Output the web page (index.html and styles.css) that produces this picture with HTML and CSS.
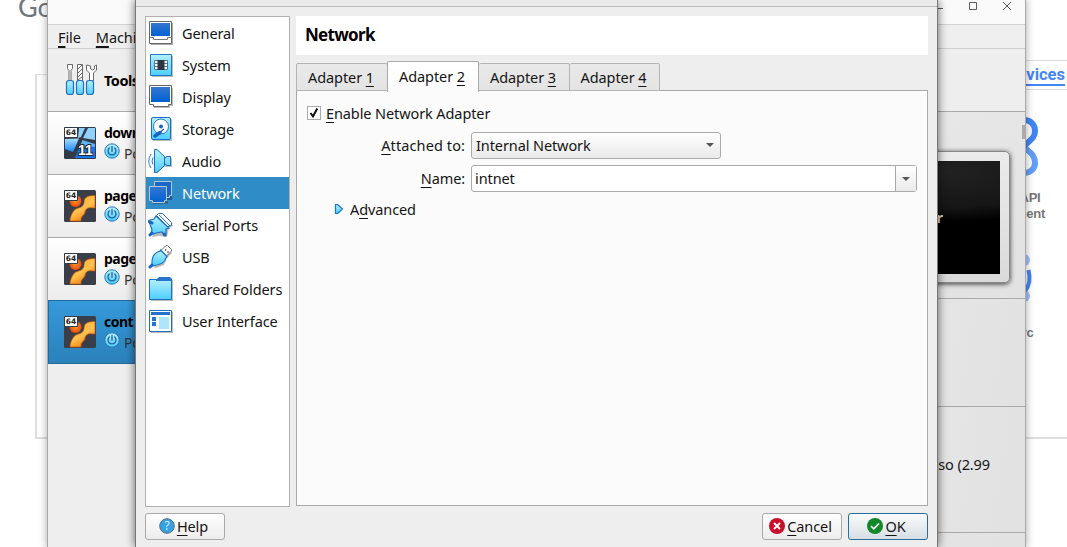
FILE: index.html
```
<!DOCTYPE html>
<html lang="en">
<head>
<meta charset="utf-8">
<title>Network settings</title>
<link rel="stylesheet" href="styles.css">
</head>
<body>
<svg class="defs" width="0" height="0" aria-hidden="true">
  <defs>
    <linearGradient id="cyan" x1="0" y1="0" x2="0" y2="1"><stop offset="0" stop-color="#b4f0ff"/><stop offset="1" stop-color="#4cceff"/></linearGradient>
    <linearGradient id="blue" x1="0" y1="0" x2="0" y2="1"><stop offset="0" stop-color="#3577cf"/><stop offset="1" stop-color="#0060d4"/></linearGradient>
    <linearGradient id="pane" x1="0" y1="0" x2="0" y2="1"><stop offset="0" stop-color="#a8ddff"/><stop offset="1" stop-color="#1688ff"/></linearGradient>
    <linearGradient id="orange" x1="0" y1="0" x2="0.6" y2="1"><stop offset="0" stop-color="#ffb13b"/><stop offset="0.6" stop-color="#ffc04e"/><stop offset="1" stop-color="#f07b0c"/></linearGradient>
    <radialGradient id="ball"><stop offset="0" stop-color="#ff9a32"/><stop offset="1" stop-color="#e84a08"/></radialGradient>
    <symbol id="bits" viewBox="0 0 14 11"><path fill="#fff" stroke="#343b46" d="M0.5 0.5h13v10h-13z"/><text class="bits-text" x="7" y="8.200" text-anchor="middle">64</text></symbol>
    <symbol id="os-win" viewBox="0 0 32 32">
      <rect width="32" height="32" rx="1.500" fill="#343b46"/>
      <path fill="#8fd0ff" d="M15 1h6l-4 9-3 1zM24 1h7v12l-12-2z"/>
      <path fill="url(#pane)" d="M1 12l14-.5L9 25l-8-3z"/>
      <path fill="#5bb5fb" d="M18.500 13L31 17v4l-15-2z"/>
      <path fill="#1675f0" d="M16 18l15 2v11H11z"/>
      <text class="eleven" x="21.500" y="27.500" text-anchor="middle">11</text>
      <use href="#bits" width="14" height="11"/>
    </symbol>
    <symbol id="os-other" viewBox="0 0 32 32">
      <rect width="32" height="32" rx="1.500" fill="#393e49"/>
      <circle cx="11.500" cy="11" r="6" fill="url(#ball)"/>
      <path fill="url(#orange)" stroke="#c95407" stroke-width=".7" d="M31 5.500c-5 0-9 .8-10.500 4-.8 2 .2 4-2 6.500-2.200 2.500-6 1.500-8.500 4.500C7.500 23.500 6 28 6 31h11c-.3-2.500.5-4.500 2.500-6s1-4 3-6c2.300-2 5.500-1 8.500-1z"/>
    </symbol>
    <symbol id="power" viewBox="0 0 16 16"><circle cx="8" cy="8" r="7.200" fill="url(#cyan)" stroke="#2877b9"/><path fill="none" stroke="#225f9d" stroke-width="1.300" stroke-linecap="round" d="M8 3.500v4.800M5.300 5a4 4 0 1 0 5.400 0"/></symbol>
  </defs>
</svg>

<div class="desktop">
  <div class="webpage">
    <div class="logo">Go</div>
    <div class="card"></div>
    <div class="services-bar"><span>vices</span></div>
    <svg class="blob" width="24" height="62" viewBox="0 0 24 62"><g fill="none" stroke-width="6"><path stroke="#669df6" d="M6 30c4 5 12 7 12 17 0 6-5 10-11 10H2"/><path stroke="#4285f4" d="M2 4h5c7 0 11 5 11 11 0 9-8 10-12 17"/></g></svg>
    <svg class="arc" width="30" height="60" viewBox="0 0 30 60"><circle cx="10" cy="9" r="6" fill="#a1c1f7"/><circle cx="10" cy="45" r="6" fill="#a1c1f7"/><path fill="none" stroke="#4285f4" stroke-width="4" d="M14.500 19c2 8 1 16-3.500 21"/></svg>
    <div class="caption caption-api">API<br>ment</div>
    <div class="caption caption-arc">Arc</div>
  </div>

  <div class="manager">
    <div class="titlebar">
      <svg width="90" height="16" viewBox="0 0 90 16" fill="none" stroke="#5b5b5b"><path d="M8 8.500h9M43.500 2.500h7v7h-7zM77 2l8 8M85 2l-8 8"/></svg>
    </div>
    <div class="menubar"><span><u>F</u>ile</span><span><u>M</u>achine</span></div>
    <div class="manager-body">
      <div class="machines">
        <div class="machine tools">
          <svg width="34" height="34" viewBox="0 0 34 34"><g fill="#fff" stroke="#6b6b6b"><path d="M3.500 1.500h5v4l-1.500 2v10H5v-10l-1.500-2zM13.500 1.500h5v16h-5zM22.500 2v5l3 3v8h4v-8l3-3V2l-2 1v3l-2 1-2-1V3z"/><path d="M14 6l4-4M14 10l4-4M14 14l4-4M14 17l4-3"/></g><g fill="url(#cyan)" stroke="#2170c4" stroke-width="1.200"><rect x="2.500" y="17.500" width="7" height="14" rx="2.500"/><rect x="12.500" y="17.500" width="7" height="14" rx="2.500"/><rect x="22.500" y="17.500" width="7" height="14" rx="2.500"/></g></svg>
          <b>Tools</b>
        </div>
        <div class="machine"><svg class="os"><use href="#os-win"/></svg><div class="info"><b>down</b><span><svg class="pw"><use href="#power"/></svg>Pow</span></div></div>
        <div class="machine"><svg class="os"><use href="#os-other"/><use href="#bits" width="14" height="11"/></svg><div class="info"><b>page</b><span><svg class="pw"><use href="#power"/></svg>Pow</span></div></div>
        <div class="machine"><svg class="os"><use href="#os-other"/><use href="#bits" width="14" height="11"/></svg><div class="info"><b>page</b><span><svg class="pw"><use href="#power"/></svg>Pow</span></div></div>
        <div class="machine selected"><svg class="os"><use href="#os-other"/><use href="#bits" width="14" height="11"/></svg><div class="info"><b>cont</b><span><svg class="pw"><use href="#power"/></svg>Pow</span></div></div>
      </div>
      <div class="details">
        <div class="toolbar"></div>
        <div class="preview"><div class="monitor"><div class="screen">r</div></div><i class="thumb"></i></div>
        <div class="section"></div>
        <div class="section storage">so (2.99</div>
        <div class="section last"></div>
      </div>
    </div>
  </div>

  <div class="dialog">
    <div class="dialog-title"></div>
    <div class="dialog-main">
      <div class="nav">
        <div class="nav-item"><svg viewBox="0 0 26 26"><path fill="#aaa" d="M3 3h22v22H3z"/><path fill="#fff" stroke="#666" d="M1.500 1.500h22v22h-22z"/><path fill="url(#blue)" d="M3 3h19v13H3z"/><path fill="#fff" stroke="#777" d="M1.500 17.500h4v2h14v-2h4"/></svg>General</div>
        <div class="nav-item"><svg viewBox="0 0 26 26"><path fill="#bbb" d="M4 4h21v21H4z"/><path fill="url(#cyan)" stroke="#217abd" d="M2.500 2.500h21v21h-21z"/><path fill="#fff" stroke="#46759c" d="M6.500 8.500h13v9h-13zM6 11.500h14M6 14.500h14"/><path fill="#2e3642" d="M9.500 8h7v10h-7z"/></svg>System</div>
        <div class="nav-item"><svg viewBox="0 0 26 26"><path fill="#bbb" d="M4 4h21v18h-3v2H6z"/><path fill="#fff" stroke="#666" d="M1.500 1.500h22v19h-3v2h-15v-2h-4z"/><path fill="url(#blue)" d="M3 3h19v15H3z"/></svg>Display</div>
        <div class="nav-item"><svg viewBox="0 0 26 26"><rect x="5" y="3" width="19" height="22" rx="1" fill="#bbb"/><rect x="3.500" y="1.500" width="19" height="22" rx="1.500" fill="url(#cyan)" stroke="#1e6fc0"/><circle cx="13" cy="10.500" r="7.500" fill="#fff" stroke="#2a78c8"/><circle cx="13" cy="10.500" r="2" fill="#1765c2"/><path stroke="#1765c2" stroke-width="3.500" stroke-linecap="round" d="M7 20l5-3.500"/><path stroke="#1765c2" stroke-width="1.500" d="M11 17l5-4"/></svg>Storage</div>
        <div class="nav-item"><svg viewBox="0 0 26 26"><path fill="#bbb" d="M8 3l6 6h9l1 2v8h-9l-6 6z"/><path fill="url(#cyan)" stroke="#1e6fc0" d="M6.500 1.500h2.500l7.500 7v9l-7.500 7H6.500zM16.500 10h1l1-1.500h4v9h-4l-1-1.500h-1z"/><path fill="none" stroke="#2a7bd0" d="M5 9.500q-2 3.500 0 7M3 6q-4.500 7 0 14"/></svg>Audio</div>
        <div class="nav-item current"><svg viewBox="0 0 26 26"><path fill="#1b5d94" d="M9 4h15v16H9z"/><path fill="#1667c9" stroke="#b7c7d4" d="M6.500 1.500h17v14h-2v2h-13v-2h-2z"/><path fill="#2c6a9c" d="M4 21h16v3H5z"/><path fill="url(#blue)" stroke="#b7c7d4" d="M1.500 6.500h17v14h-2v2h-12v-2h-3z"/></svg>Network</div>
        <div class="nav-item"><svg viewBox="0 0 26 26"><path fill="#bbb" d="M12 3l13 11-4 2-2 9-8-1-7 1z"/><path fill="#fff" stroke="#1e6fc0" d="M10.500 1.500h4l9 9v3l-4 1-11-11z"/><path fill="url(#cyan)" stroke="#1e6fc0" stroke-width="1.200" d="M8 4l13 12-3 1v5l-2 1-2-3-6 1-3 1-2-1 1-3-2-6-2-3 2-1 4-1z"/><path fill="none" stroke="#2a7bd0" d="M11 3l11 11"/><path stroke="#1765c2" stroke-width="3" stroke-linecap="round" d="M2 23l2-2M2 10l2 1M16 22l1 1"/></svg>Serial Ports</div>
        <div class="nav-item"><svg viewBox="0 0 26 26"><path fill="#bbb" d="M18 3l6 6-5 5-3 7-8 3-3-1z"/><path fill="#fff" stroke="#777" d="M13 6.500l5-5h1.500l4 4V7l-5 5z"/><path stroke="#444" stroke-width="1.500" d="M17 5.500l1 1M19.500 7.500l1 1"/><path fill="url(#cyan)" stroke="#1e6fc0" stroke-width="1.200" d="M12.500 6l6.500 6.500-1 1.500c-1 5-6 7-14 8-.5-8 1-13 8-15z"/><path stroke="#1765c2" stroke-width="3" stroke-linecap="round" d="M2 23l2-2"/></svg>USB</div>
        <div class="nav-item"><svg viewBox="0 0 26 26"><path fill="#bbb" d="M3 4h22v21H3z"/><path fill="url(#cyan)" stroke="#1e72bd" d="M1.500 3.500h22v20h-22z"/><path fill="#2673ce" d="M8 4l3-3h11l2 2v2H8z"/></svg>Shared Folders</div>
        <div class="nav-item"><svg viewBox="0 0 26 26"><path fill="#bbb" d="M3 4h22v21H3z"/><path fill="#fff" stroke="#1e72bd" d="M1.500 2.500h22v21h-22z"/><path fill="#2673ce" d="M3 4h19v3H3zM4 9h4v4H4zM4 14h4v4H4z"/><path fill="#ace6fd" d="M11 9h10v12H11z"/></svg>User Interface</div>
      </div>
      <div class="settings">
        <h1>Network</h1>
        <div class="tabs">
          <div class="tab">Adapter <u>1</u></div><div class="tab active">Adapter <u>2</u></div><div class="tab">Adapter <u>3</u></div><div class="tab">Adapter <u>4</u></div>
        </div>
        <div class="panel">
          <div class="check"><span class="box"><svg width="12" height="12" viewBox="0 0 12 12"><path fill="none" stroke="#111" stroke-width="2" d="M2.500 6l2.500 3.300L9.300 1.500"/></svg></span><span><u>E</u>nable Network Adapter</span></div>
          <div class="form">
            <label class="wide"><u>A</u>ttached to:</label>
            <div class="combo">Internal Network<i class="caret"></i></div>
            <label><u>N</u>ame:</label>
            <div class="edit"><span>intnet</span><div class="drop"><i class="caret"></i></div></div>
          </div>
          <div class="advanced"><svg width="10" height="12" viewBox="0 0 10 12"><path fill="url(#cyan)" stroke="#1876d0" stroke-width="1.200" stroke-linejoin="round" d="M1.500 1.500h2l5 4.500-5 4.500h-2z"/></svg><span>A<u>d</u>vanced</span></div>
        </div>
      </div>
    </div>
    <div class="buttons">
      <div class="btn"><svg viewBox="0 0 16 16"><circle cx="8" cy="8" r="7.300" fill="#35a2e4" stroke="#5b6b78"/><text class="q" x="8" y="12" text-anchor="middle">?</text></svg><span><u>H</u>elp</span></div>
      <div class="spacer"></div>
      <div class="btn"><svg viewBox="0 0 16 16"><circle cx="8" cy="8" r="8" fill="#c8102e"/><path stroke="#fff" stroke-width="1.800" d="M5 5l6 6M11 5l-6 6"/></svg><span><u>C</u>ancel</span></div>
      <div class="btn default"><svg viewBox="0 0 16 16"><circle cx="8" cy="8" r="8" fill="#12882a"/><path fill="none" stroke="#fff" stroke-width="1.600" d="M4 8l2.800 2.800L12 5.500"/></svg><span><u>O</u>K</span></div>
    </div>
  </div>
</div>
</body>
</html>
```
FILE: styles.css
```
* { box-sizing: border-box; }
body { margin: 0; font: 14.5px/20px "Noto Sans", "Open Sans", sans-serif; letter-spacing: -0.1px; color: #151515; }
u { text-decoration: underline; text-decoration-thickness: 1px; text-underline-offset: 3px; text-decoration-skip-ink: none; }
svg { flex: none; display: block; }
.defs { position: absolute; }
.desktop { position: relative; width: 1067px; height: 547px; overflow: hidden; background: #fff; }

/* Browser page behind the windows */
.webpage { position: absolute; inset: 0; font-family: Roboto, sans-serif; }
.logo { position: absolute; left: 18px; top: -9px; font: 27px/32px Lato, sans-serif; color: #71757a; }
.card { position: absolute; left: 35px; top: 74px; width: 1060px; height: 365px; border: 2px solid #dedede; border-top-width: 1px; }
.services-bar { position: absolute; left: 900px; right: 0; top: 60px; height: 30px; background: #fff; border: solid #dadada; border-width: 1px 0; text-align: right; padding: 4px 2px 0 0; }
.services-bar span { font: bold 16.5px/20px Roboto, sans-serif; letter-spacing: 0; color: #4285f4; border-bottom: 2px solid #4285f4; }
.blob { position: absolute; left: 1017px; top: 116px; }
.arc { position: absolute; left: 1014px; top: 251px; }
.caption { position: absolute; font: bold 13px/16px "Liberation Sans", sans-serif; letter-spacing: -0.2px; color: #777; text-align: center; }
.caption-api { left: 1008px; top: 190px; width: 44px; }
.caption-arc { left: 1009px; top: 325px; width: 28px; }

/* Manager window */
.manager { position: absolute; left: 47px; top: -1px; width: 979px; height: 549px; display: flex; flex-direction: column; background: #eee; border: solid #a9a9a9; border-width: 0 1px; box-shadow: 0 0 8px rgba(0,0,0,.35); }
.titlebar { flex: none; height: 26px; background: #fafafa; border-bottom: 1px solid #d3d3d3; display: flex; justify-content: flex-end; padding: 1px 9px 0 0; }
.menubar { flex: none; height: 24px; background: #efefef; border-bottom: 1px solid #d0d0d0; display: flex; gap: 15px; padding: 2px 10px; }
.menubar u { text-decoration-thickness: 2px; }
.manager-body { flex: 1; min-height: 0; display: flex; }
.machines { width: 300px; flex: none; }
.machine { height: 63px; display: flex; align-items: center; gap: 8px; padding-left: 16px; border-bottom: 1px solid #aaa; background: linear-gradient(#fff, #ececec); }
.machine b { color: #000; letter-spacing: -0.5px; }
.machine.tools { background: #eee; gap: 6px; }
.machine.selected { background: linear-gradient(#3699db, #2b81ba); border: 1px solid #246b9c; padding-left: 15px; margin-top: -1px; height: 64px; }
.os { width: 32px; height: 32px; }
.pw { width: 16px; height: 16px; margin-top: -5px; }
.info { display: flex; flex-direction: column; font-size: 14px; gap: 1px; }
.info span { display: flex; align-items: center; gap: 4px; color: #333; }
.bits-text { font: bold 7.5px "DejaVu Sans", sans-serif; letter-spacing: 0; fill: #222; }
.eleven { font: bold 14px "Liberation Sans", sans-serif; letter-spacing: 0; fill: #fff; stroke: #222b36; stroke-width: 2px; paint-order: stroke; }
.details { flex: 1; display: flex; flex-direction: column; background: linear-gradient(100deg, #eaeaea 70%, #e2e2e2 100%); }
.toolbar { flex: none; height: 63px; background: #eee; border-bottom: 1px solid #aaa; }
.preview { flex: none; position: relative; height: 187px; border-bottom: 1px solid #aaa; background: linear-gradient(165deg, #eaeaea, #e2e2e2); display: flex; justify-content: flex-end; padding: 39px 15px 0 0; }
.monitor { width: 210px; height: 132px; padding: 9px; border-radius: 5px; border: 1px solid #888; background: linear-gradient(#ebebeb, #dadada); box-shadow: 0 1px 5px #333; }
.screen { height: 113px; background: radial-gradient(ellipse 160px 50px at 70% 10%, #222, #161616 70%, #000 100%); color: #ddd; font-weight: bold; padding: 46px 57px 0 0; text-align: right; }
.thumb { position: absolute; right: 0; top: 13px; width: 3px; height: 14px; background: #aaa; }
.section { flex: none; height: 108px; border-bottom: 1px solid #aaa; background: linear-gradient(100deg, #e5e5e5 86%, #e1e1e1); }
.section.storage { height: 126px; padding: 47px 35px 0 0; text-align: right; }
.section.last { flex: 1; border: 0; }

/* Settings dialog */
.dialog { position: absolute; left: 135px; top: 0; width: 803px; height: 547px; background: #eee; border: solid #777; border-width: 0 1px; box-shadow: 0 0 9px rgba(0,0,0,.6); display: flex; flex-direction: column; }
.dialog-title { height: 7px; background: #ebebeb; border-bottom: 1px solid #bbb; }
.dialog-main { display: flex; gap: 6px; padding: 9px 9px 0; height: 500px; }
.nav { width: 145px; height: 491px; background: #fff; border: 1px solid #b1b1b1; }
.nav-item { height: 32px; display: flex; align-items: center; gap: 8px; padding-left: 2px; white-space: nowrap; }
.nav-item svg { width: 26px; height: 26px; }
.nav-item.current { background: #308cc6; color: #fff; }
.settings { flex: 1; height: 490px; display: flex; flex-direction: column; }
h1 { margin: 0 0 7px; height: 39px; background: #fff; padding: 8px 9px; font: bold 17px/22px "Noto Sans", sans-serif; letter-spacing: -0.7px; color: #000; }
.tabs { height: 29px; display: flex; align-items: flex-end; position: relative; }
.tab { height: 28px; width: 91px; border: 1px solid #b4b4b4; border-left-width: 0; border-radius: 2px 2px 0 0; background: linear-gradient(#e9e9e9, #e4e4e4); text-align: center; padding: 3px 2px 0 0; }
.tab:first-child { border-left-width: 1px; width: 92px; }
.tab.active { height: 31px; background: linear-gradient(#fff, #fbfbfb); border: 1px solid #aaa; border-bottom: 0; margin-left: -1px; width: 92px; margin-bottom: -1px; padding-top: 4px; }
.tab:last-child { width: 90px; }
.panel { flex: 1; background: #fbfbfb; border: 1px solid #a9a9a9; margin-top: -1px; padding: 12px 10px; }
.check { display: flex; align-items: center; gap: 5px; height: 20px; }
.box { width: 14px; height: 14px; border: 1px solid #aaa; background: #fff; }
.form { display: grid; grid-template-columns: 158px 446px; column-gap: 6px; row-gap: 6px; margin-top: 9px; }
label { text-align: right; line-height: 27px; }
label.wide { letter-spacing: 0.1px; }
.combo { width: 250px; height: 27px; border: 1px solid #aaa; border-radius: 3px; background: linear-gradient(#fefefe, #eaeaea); display: flex; align-items: center; justify-content: space-between; padding: 0 6px 1px 4px; }
.caret { width: 0; height: 0; border: solid transparent; border-width: 4px 4px 0; border-top-color: #555; }
.edit { height: 27px; border: 1px solid #aaa; border-radius: 3px; background: #fff; display: flex; justify-content: space-between; line-height: 25px; padding-left: 3px; }
.drop { width: 21px; border-left: 1px solid #aaa; background: linear-gradient(#fefefe, #eaeaea); display: flex; align-items: center; justify-content: center; padding-right: 1px; }
.advanced { display: flex; align-items: center; gap: 6px; margin: 7px 0 0 27px; }
.buttons { display: flex; gap: 6px; padding: 6px 9px; }
.spacer { flex: 1; }
.btn { width: 80px; height: 27px; border: 1px solid #aaa; border-radius: 3px; background: linear-gradient(#fefefe, #ededed); display: flex; align-items: center; justify-content: center; gap: 2px; padding: 0 3px 1px 0; }
.btn svg { width: 16px; height: 16px; }
.btn.default { border-color: #246e9e; background: linear-gradient(#fbfcfd, #d6dee4); }
.q { font: 12px "Noto Sans", sans-serif; fill: #d8f0ff; }
```
